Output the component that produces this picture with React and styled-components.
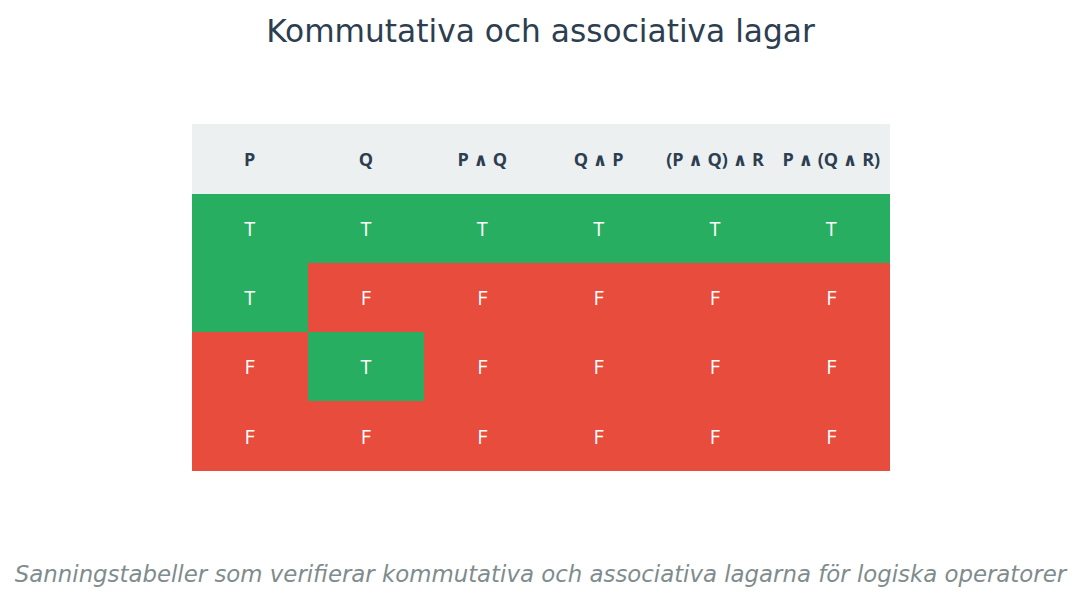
import React from "react";
import styled, { createGlobalStyle } from "styled-components";

const Global = createGlobalStyle`
  html, body { margin: 0; padding: 0; background: #ffffff; }
  body { font-family: "DejaVu Sans", sans-serif; }
`;

const Page = styled.div`
  width: 1081px;
  height: 607px;
  display: flex;
  flex-direction: column;
  align-items: center;
  box-sizing: border-box;
  padding-top: 13px;
`;

const Title = styled.h1`
  margin: 0;
  font-family: "DejaVu Sans", sans-serif;
  font-weight: normal;
  font-size: 31.25px;
  line-height: 36px;
  color: #2c3e50;
`;

const Table = styled.div`
  margin-top: 75px;
  width: 698px;
  display: grid;
  grid-template-columns: repeat(6, 1fr);
  grid-template-rows: 70px 69px 69px 69px 70px;
`;

const HeadCell = styled.div`
  background: #ecf0f1;
  color: #2c3e50;
  font-family: "Open Sans", "DejaVu Sans", sans-serif;
  font-weight: 700;
  font-size: 18px;
  display: flex;
  align-items: center;
  justify-content: center;
  white-space: nowrap;
`;

const Cell = styled.div`
  background: ${(p) => (p.$v ? "#27ae60" : "#e74c3c")};
  color: #ffffff;
  font-family: "Open Sans", "DejaVu Sans", sans-serif;
  font-size: 20px;
  display: flex;
  align-items: center;
  justify-content: center;
`;

const Caption = styled.p`
  margin: 90px 0 0;
  font-family: "DejaVu Sans", sans-serif;
  font-style: italic;
  font-size: 22.85px;
  line-height: 26px;
  color: #7f8c8d;
  white-space: nowrap;
`;

const headers = ["P", "Q", "P ∧ Q", "Q ∧ P", "(P ∧ Q) ∧ R", "P ∧ (Q ∧ R)"];
const rows = [
  [1, 1, 1, 1, 1, 1],
  [1, 0, 0, 0, 0, 0],
  [0, 1, 0, 0, 0, 0],
  [0, 0, 0, 0, 0, 0],
];

export default function App() {
  return (
    <>
      <Global />
      <Page>
        <Title>Kommutativa och associativa lagar</Title>
        <Table>
          {headers.map((h) => (
            <HeadCell key={h}>{h}</HeadCell>
          ))}
          {rows.map((r, i) =>
            r.map((v, j) => (
              <Cell key={`${i}-${j}`} $v={!!v}>
                {v ? "T" : "F"}
              </Cell>
            ))
          )}
        </Table>
        <Caption>
          Sanningstabeller som verifierar kommutativa och associativa lagarna för logiska operatorer
        </Caption>
      </Page>
    </>
  );
}
